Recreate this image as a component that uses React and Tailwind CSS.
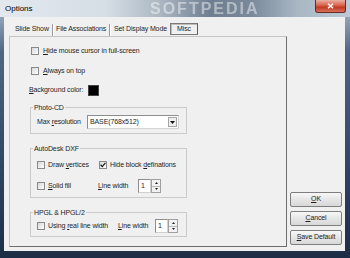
import React from "react";

const font = "font-['Liberation_Sans',Arial,sans-serif]";

function U({ children }) {
  return <span className="underline underline-offset-[1px]">{children}</span>;
}

function Box({ checked }) {
  return (
    <span className="flex h-[8px] w-[8px] shrink-0 items-center justify-center border border-[#8a8a8a] bg-[linear-gradient(135deg,#d8d8d8,#ffffff)]">
      {checked && (
        <svg width="6" height="6" viewBox="0 0 6 6">
          <path d="M0.6 2.8 L2.3 4.6 L5.4 0.9" fill="none" stroke="#1c1c1c" strokeWidth="1.3" />
        </svg>
      )}
    </span>
  );
}

function Tri({ up }) {
  return (
    <svg width="3" height="2" viewBox="0 0 3 2">
      <path d={up ? "M1.5 0 L3 2 L0 2 Z" : "M0 0 L3 0 L1.5 2 Z"} fill="#222" />
    </svg>
  );
}

function Spin() {
  return (
    <div className="flex h-[14px]">
      <div className="flex w-[13px] items-center border border-[#8d8d8d] border-r-[#d0d0d0] border-b-[#d0d0d0] bg-white pl-[2px]">1</div>
      <div className="flex w-[10px] flex-col border border-[#a0a0a0]">
        <span className="flex flex-1 items-center justify-center border-b border-[#b8b8b8] bg-[#f2f2f2]">
          <Tri up />
        </span>
        <span className="flex flex-1 items-center justify-center bg-[#f2f2f2]">
          <Tri />
        </span>
      </div>
    </div>
  );
}

function Group({ label, className, children }) {
  return (
    <fieldset className={`ml-[20px] w-[157px] border border-[#cbcbcb] ${className}`}>
      <legend className="ml-[2px] px-[1px] leading-[9px]">{label}</legend>
      {children}
    </fieldset>
  );
}

function Btn({ children }) {
  return (
    <div className="flex h-[15px] w-[52px] items-center justify-center rounded-[2px] border border-[#7e7e7e] bg-[linear-gradient(180deg,#f7f7f7,#e6e6e6_50%,#d8d8d8)]">
      {children}
    </div>
  );
}

function Sep() {
  return (
    <span className="flex h-[12px]">
      <span className="w-px bg-[#9a9a9a]" />
      <span className="w-px bg-white" />
    </span>
  );
}

export default function App() {
  return (
    <div className={`${font} flex h-[258px] w-[350px] flex-col overflow-hidden bg-[linear-gradient(180deg,#b4c2d0,#4f6683_20%,#2c4160_70%,#1d2d45)] text-[7px] tracking-[-0.12px] text-[#1e1e1e]`}>
      {/* title bar */}
      <div className="relative flex h-[17px] shrink-0 overflow-hidden bg-[linear-gradient(90deg,#e2e8ee_0%,#d6dee6_30%,#aeb9c4_45%,#6f7f91_60%,#7a8a9b_72%,#a9b7c5_85%,#bccad7_100%)]">
        <span className="absolute left-[150px] top-0 text-[16px] leading-[17px] font-bold tracking-[2px] text-white/45 blur-[0.4px]">SOFTPEDIA</span>
        <span className="relative ml-[5px] self-center text-[8px] tracking-normal text-black">Options</span>
        <div className="relative mr-[4px] ml-auto flex h-[13px] w-[31px] items-center justify-center rounded-b-[3px] border border-t-0 border-[#6a2a22] bg-[linear-gradient(180deg,#eab0a3,#d9604b_45%,#c13a22_60%,#d9705f)]">
          <svg width="7" height="6" viewBox="0 0 7 6">
            <path d="M1 0.8 L6 5.2 M6 0.8 L1 5.2" stroke="#fff" strokeWidth="1.5" />
          </svg>
        </div>
      </div>

      {/* client */}
      <div className="ml-[4px] mr-[5px] mb-[7px] flex flex-1 bg-[#f0f0f0]">
        <div className="flex flex-col pl-[5px] pb-[4px]">
          {/* tabs */}
          <div className="mt-[6px] flex h-[13px] items-center">
            <span className="w-[43px] pl-[6px]">Slide Show</span>
            <Sep />
            <span className="w-[55px] pl-[2px]">File Associations</span>
            <Sep />
            <span className="w-[59px] pl-[3px]">Set Display Mode</span>
            <span className="flex h-[12px] w-[28px] items-center justify-center self-start border border-[#7a7a7a] border-r-[#5c5c5c] shadow-[inset_1px_1px_0_#bdbdbd]">
              Misc
            </span>
          </div>

          {/* panel */}
          <div className="flex h-[211px] w-[278px] flex-col border border-t-[#c4c4c4] border-l-[#c4c4c4] border-r-[#6e6e6e] border-b-[#6e6e6e]">
            <div className="mt-[8px] ml-[21px] flex h-[12px] items-center">
              <Box />
              <span className="ml-[4px]"><U>H</U>ide mouse cursor in full-screen</span>
            </div>
            <div className="mt-[8px] ml-[21px] flex h-[12px] items-center">
              <Box />
              <span className="ml-[4px]"><U>A</U>lways on top</span>
            </div>
            <div className="mt-[7px] ml-[19px] flex h-[12px] items-center">
              <span><U>B</U>ackground color:</span>
              <span className="ml-[5px] h-[11px] w-[11px] border border-[#444] bg-black" />
            </div>

            <Group label="Photo-CD" className="mt-[7px]">
              <div className="mt-[3px] mb-[4px] ml-[6px] flex h-[14px] items-center">
                <span className="w-[50px]">Max <U>r</U>esolution</span>
                <div className="flex h-[14px] w-[92px] items-center border border-[#8d8d8d] border-r-[#d4d4d4] border-b-[#d4d4d4] bg-white">
                  <span className="ml-[2px] flex-1">BASE(768x512)</span>
                  <span className="mr-[1px] flex h-[10px] w-[9px] items-center justify-center border border-[#a6a6a6] bg-[#eeeeee]">
                    <svg width="5" height="3" viewBox="0 0 5 3">
                      <path d="M0 0 L5 0 L2.5 3 Z" fill="#111" />
                    </svg>
                  </span>
                </div>
              </div>
            </Group>

            <Group label="AutoDesk DXF" className="mt-[10px]">
              <div className="mt-[6px] ml-[6px] flex h-[12px] items-center">
                <span className="flex w-[61px] items-center">
                  <Box />
                  <span className="ml-[3px]">Draw <U>v</U>ertices</span>
                </span>
                <span className="ml-[1px] flex items-center">
                  <Box checked />
                  <span className="ml-[3px]">Hide block <U>d</U>efinations</span>
                </span>
              </div>
              <div className="mt-[8px] mb-[4px] ml-[6px] flex h-[14px] items-center">
                <span className="flex w-[61px] items-center">
                  <Box />
                  <span className="ml-[3px]"><U>S</U>olid fill</span>
                </span>
                <span className="w-[40px]"><U>L</U>ine width</span>
                <Spin />
              </div>
            </Group>

            <Group label="HPGL & HPGL/2" className="mt-[10px]">
              <div className="mt-[2px] mb-[3px] ml-[6px] flex h-[14px] items-center">
                <span className="flex w-[81px] items-center">
                  <Box />
                  <span className="ml-[3px]">Using <U>r</U>eal line width</span>
                </span>
                <span className="w-[37px]"><U>L</U>ine width</span>
                <Spin />
              </div>
            </Group>
          </div>
        </div>

        {/* buttons */}
        <div className="ml-[3px] flex flex-col justify-end gap-[4px] pb-[6px]">
          <Btn><U>O</U>K</Btn>
          <Btn><U>C</U>ancel</Btn>
          <Btn><U>S</U>ave Default</Btn>
        </div>
      </div>
    </div>
  );
}
